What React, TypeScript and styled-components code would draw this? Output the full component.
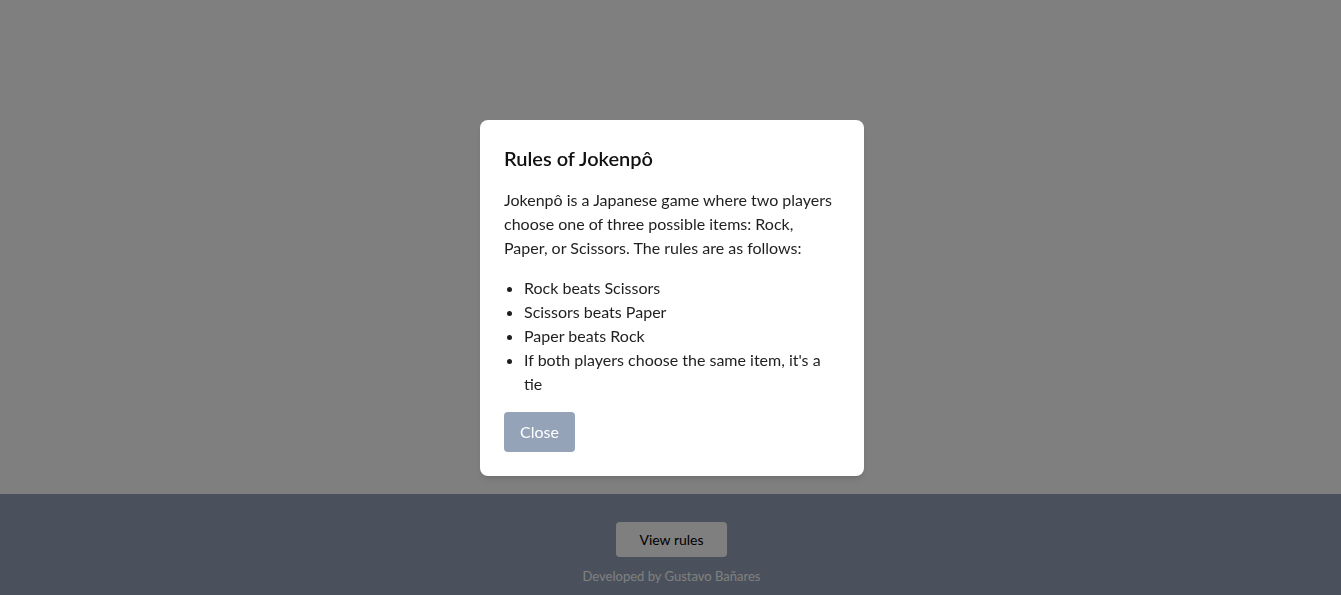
import React from "react";
import styled, { createGlobalStyle } from "styled-components";

const Global = createGlobalStyle`
  * { box-sizing: border-box; }
  html, body { margin: 0; padding: 0; }
  body {
    font-family: Lato, "Liberation Sans", sans-serif;
    background: #ffffff;
    color: #111827;
  }
`;

const Page = styled.div`
  min-height: 100vh;
  display: flex;
  flex-direction: column;
`;

const Main = styled.main`
  flex: 1;
`;

const Footer = styled.footer`
  height: 101px;
  background: #94a3b8;
  display: flex;
  flex-direction: column;
  align-items: center;
  padding-top: 28px;
  padding-left: 2px;
  gap: 11px;
`;

const FooterButton = styled.button`
  width: 111px;
  height: 35px;
  border: none;
  border-radius: 4px;
  background: #ffffff;
  color: #000000;
  font-family: inherit;
  font-size: 14px;
  cursor: pointer;
`;

const Credit = styled.p`
  margin: 0;
  font-size: 13px;
  line-height: 16px;
  color: #ffffff;
`;

const Overlay = styled.div`
  position: fixed;
  inset: 0;
  background: rgba(0, 0, 0, 0.5);
  display: flex;
  align-items: center;
  justify-content: center;
  padding-left: 3px;
`;

const Modal = styled.div`
  width: 384px;
  background: #ffffff;
  border-radius: 8px;
  padding: 24px;
  box-shadow: 0 4px 6px -1px rgba(0, 0, 0, 0.1), 0 2px 4px -2px rgba(0, 0, 0, 0.1);
`;

const Title = styled.h2`
  margin: 0 0 16px;
  font-size: 20px;
  line-height: 28px;
  font-weight: 600;
  color: #111111;
`;

const Text = styled.p`
  margin: 0 0 16px;
  font-size: 16px;
  line-height: 24px;
  color: #1f1f1f;
`;

const List = styled.ul`
  margin: 0 0 16px;
  padding-left: 20px;
  font-size: 16px;
  line-height: 24px;
  color: #1f1f1f;
`;

const Item = styled.li``;

const CloseButton = styled.button`
  height: 40px;
  padding: 0 16px;
  border: none;
  border-radius: 4px;
  background: #94a3b8;
  color: #ffffff;
  font-family: inherit;
  font-size: 16px;
  line-height: 24px;
  cursor: pointer;
`;

const rules = [
  "Rock beats Scissors",
  "Scissors beats Paper",
  "Paper beats Rock",
  "If both players choose the same item, it's a tie",
];

export default function App() {
  return (
    <>
      <Global />
      <Page>
        <Main />
        <Footer>
          <FooterButton>View rules</FooterButton>
          <Credit>Developed by Gustavo Bañares</Credit>
        </Footer>
      </Page>
      <Overlay>
        <Modal>
          <Title>Rules of Jokenpô</Title>
          <Text>
            Jokenpô is a Japanese game where two players choose one of three
            possible items: Rock, Paper, or Scissors. The rules are as follows:
          </Text>
          <List>
            {rules.map((r) => (
              <Item key={r}>{r}</Item>
            ))}
          </List>
          <CloseButton>Close</CloseButton>
        </Modal>
      </Overlay>
    </>
  );
}
